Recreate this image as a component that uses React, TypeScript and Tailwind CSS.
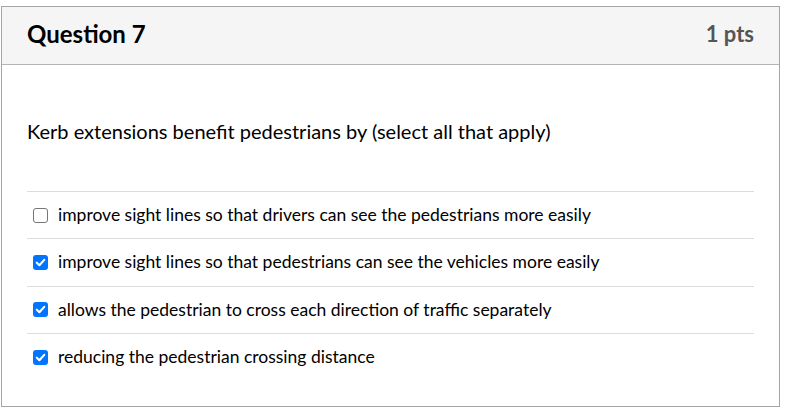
import React from 'react';

type Answer = {
  id: string;
  text: string;
  checked: boolean;
};

const answers: Answer[] = [
  { id: 'a1', text: 'improve sight lines so that drivers can see the pedestrians more easily', checked: false },
  { id: 'a2', text: 'improve sight lines so that pedestrians can see the vehicles more easily', checked: true },
  { id: 'a3', text: 'allows the pedestrian to cross each direction of traffic separately', checked: true },
  { id: 'a4', text: 'reducing the pedestrian crossing distance', checked: true },
];

function CheckBox({ checked }: { checked: boolean }) {
  if (!checked) {
    return <span className="block w-[15px] h-[15px] rounded-[3px] border border-[#767676] bg-white" />;
  }
  return (
    <span className="flex items-center justify-center w-[15px] h-[15px] rounded-[3px] bg-[#0075ff]">
      <svg width="11" height="11" viewBox="0 0 10 10">
        <path d="M1.6 5.2 L4 7.5 L8.4 2.6" fill="none" stroke="white" strokeWidth="1.9" strokeLinecap="round" strokeLinejoin="round" />
      </svg>
    </span>
  );
}

export default function App() {
  return (
    <div className="pt-[6px] pl-[1px] font-['Lato',sans-serif]">
      <div className="w-[779px] h-[401px] border border-[#a5a5a5] bg-white">
        <div className="h-[58px] bg-[#f5f5f5] border-b border-[#b5b5b5] flex items-center justify-between pl-[25px] pr-[25px] pb-[4px]">
          <h2 className="text-[24px] font-bold text-black">Question 7</h2>
          <span className="text-[22px] font-bold text-[#555]">1 pts</span>
        </div>
        <div className="px-[25px] pt-[51px]">
          <p className="text-[20px] text-black leading-[30px]">
            Kerb extensions benefit pedestrians by (select all that apply)
          </p>
          <div className="mt-[45px]">
            {answers.map((a) => (
              <label
                key={a.id}
                className="flex items-center gap-[10px] h-[47.33px] border-t border-[#dcdcdc] pl-[6px] text-[17.5px] text-black"
              >
                <CheckBox checked={a.checked} />
                <span>{a.text}</span>
              </label>
            ))}
          </div>
        </div>
      </div>
    </div>
  );
}
